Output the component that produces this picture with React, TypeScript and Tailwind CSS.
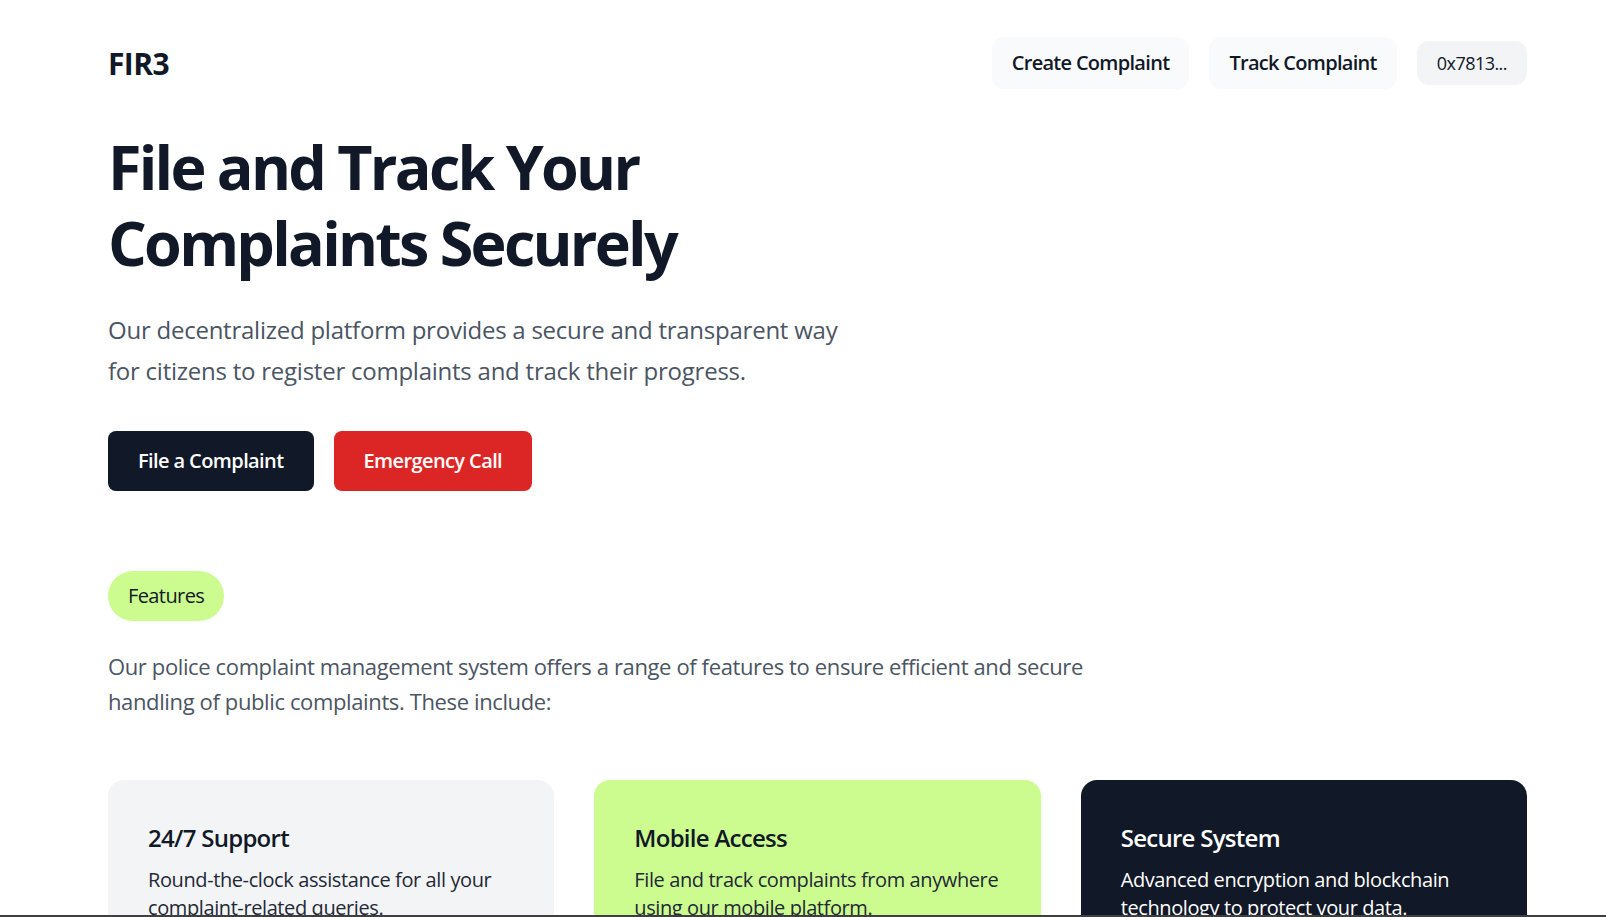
import React from "react";

const cards = [
  {
    title: "24/7 Support",
    text: "Round-the-clock assistance for all your complaint-related queries.",
    cls: "bg-[#f3f4f6] text-[#111827]",
    textCls: "text-[#1f2937]",
  },
  {
    title: "Mobile Access",
    text: "File and track complaints from anywhere using our mobile platform.",
    cls: "bg-[#ccfc8f] text-[#111827]",
    textCls: "text-[#1f2937]",
  },
  {
    title: "Secure System",
    text: "Advanced encryption and blockchain technology to protect your data.",
    cls: "bg-[#111827] text-white",
    textCls: "text-white",
  },
];

export default function App() {
  return (
    <div className="relative h-[917px] overflow-hidden bg-white font-['Open_Sans',sans-serif] text-[#111827]">
      <div className="pl-[108px] pr-[79px]">
        <nav className="flex items-center justify-between pt-[37px]">
          <div className="mt-[2px] text-[30px] font-bold leading-none tracking-[-0.02em]">FIR3</div>
          <div className="flex items-center gap-5">
            <button className="rounded-xl bg-[#f9fafb] px-5 py-3 text-[20px] font-semibold leading-7 tracking-[-0.035em] text-[#111827]">
              Create Complaint
            </button>
            <button className="rounded-xl bg-[#f9fafb] px-5 py-3 text-[20px] font-semibold leading-7 tracking-[-0.035em] text-[#111827]">
              Track Complaint
            </button>
            <button className="rounded-xl bg-[#f3f4f6] px-5 py-2 text-[18px] font-medium leading-7 tracking-[-0.03em] text-[#111827]">
              0x7813...
            </button>
          </div>
        </nav>

        <section className="mt-10">
          <h1 className="text-[61px] font-bold leading-[76px] tracking-[-0.045em] text-[#111827]">
            File and Track Your
            <br />
            Complaints Securely
          </h1>
          <p className="mt-7 max-w-[750px] text-[24px] leading-[41px] tracking-[-0.01em] text-[#4b5563]">
            Our decentralized platform provides a secure and transparent way for citizens to register complaints and track their progress.
          </p>
          <div className="mt-10 flex gap-5">
            <button className="rounded-lg bg-[#111827] px-[30px] py-4 text-[20px] font-semibold leading-7 tracking-[-0.03em] text-white">
              File a Complaint
            </button>
            <button className="rounded-lg bg-[#dc2626] px-[30px] py-4 text-[20px] font-semibold leading-7 tracking-[-0.03em] text-white">
              Emergency Call
            </button>
          </div>
        </section>

        <section className="mt-20">
          <span className="inline-block rounded-full bg-[#ccfc8f] px-5 py-[11px] text-[20px] leading-7 tracking-[-0.03em] text-[#111827]">
            Features
          </span>
          <p className="mt-7 max-w-[1030px] text-[22px] leading-[35px] tracking-[-0.017em] text-[#4b5563]">
            Our police complaint management system offers a range of features to ensure efficient and secure handling of public complaints. These include:
          </p>
          <div className="mt-[61px] grid grid-cols-3 gap-10">
            {cards.map((c) => (
              <div key={c.title} className={`rounded-2xl px-10 pb-10 pt-[42px] ${c.cls}`}>
                <h3 className="text-[24px] font-semibold leading-8 tracking-[-0.03em]">{c.title}</h3>
                <p className={`mt-3 text-[20px] leading-[28px] tracking-[-0.02em] ${c.textCls}`}>{c.text}</p>
              </div>
            ))}
          </div>
        </section>
      </div>
      <div className="absolute bottom-0 left-0 right-0 h-[2px] bg-[#3f3f3f]" />
    </div>
  );
}
